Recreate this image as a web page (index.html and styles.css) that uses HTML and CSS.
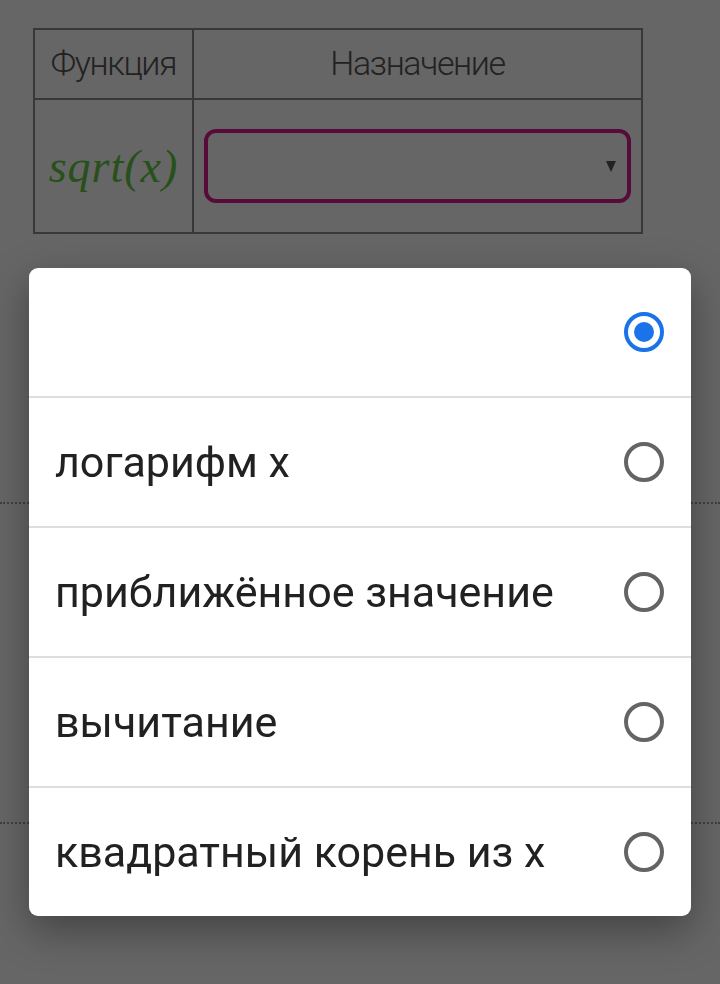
FILE: index.html
```html
<!DOCTYPE html>
<html lang="ru">
<head>
    <meta charset="UTF-8">
    <meta name="viewport" content="width=device-width, initial-scale=1.0">
    <title>Функции</title>
    <link rel="stylesheet" href="styles.css">
</head>
<body>
    <div class="page">
        <table class="task">
            <tr>
                <th class="col-fn">Функция</th>
                <th>Назначение</th>
            </tr>
            <tr>
                <td class="math">sqrt(<i>x</i>)</td>
                <td>
                    <div class="select">
                        <span class="arrow"></span>
                    </div>
                </td>
            </tr>
        </table>

        <div class="dots first"></div>
        <div class="dots"></div>
    </div>

    <!-- выпадающий список -->
    <div class="dialog">
        <div class="option">
            <span class="label"></span>
            <span class="radio checked"></span>
        </div>
        <div class="option">
            <span class="label">логарифм x</span>
            <span class="radio"></span>
        </div>
        <div class="option">
            <span class="label">приближённое значение</span>
            <span class="radio"></span>
        </div>
        <div class="option">
            <span class="label">вычитание</span>
            <span class="radio"></span>
        </div>
        <div class="option">
            <span class="label">квадратный корень из x</span>
            <span class="radio"></span>
        </div>
    </div>
</body>
</html>
```

FILE: styles.css
```css
* {
    margin: 0;
    padding: 0;
    box-sizing: border-box;
}

body {
    background: #666666;
    font-family: Roboto, 'Noto Sans', sans-serif;
    min-height: 100vh;
}

.page {
    padding: 28px 0 0 33px;
}

.task {
    border-collapse: collapse;
    width: 610px;
}

.task th,
.task td {
    border: 2px solid #383838;
    text-align: center;
    vertical-align: middle;
}

.task th {
    height: 70px;
    padding-bottom: 3px;
    font-family: Roboto, sans-serif;
    font-weight: 300;
    font-size: 34px;
    letter-spacing: -1.4px;
    color: #222;
}

.task .col-fn {
    width: 159px;
}

.task td {
    height: 134px;
}

.math {
    font-family: 'Liberation Serif', 'DejaVu Serif', serif;
    font-style: italic;
    font-size: 46px;
    color: #27501a;
    letter-spacing: 1px;
}

.math i {
    font-style: italic;
}

.select {
    margin: 0 10px 0 10px;
    height: 74px;
    border: 4px solid #560b39;
    border-radius: 12px;
    display: flex;
    align-items: center;
    justify-content: flex-end;
    padding-right: 11px;
}

.arrow {
    width: 0;
    height: 0;
    border-left: 5px solid transparent;
    border-right: 5px solid transparent;
    border-top: 11px solid #222;
}

.dots {
    margin-left: -33px;
    height: 0;
    border-top: 2px dotted #3b4148;
    margin-top: 318px;
}

.dots.first {
    margin-top: 268px;
}

/* диалог выбора */
.dialog {
    position: fixed;
    left: 29px;
    top: 268px;
    width: 662px;
    background: #fff;
    border-radius: 9px;
    box-shadow: 0 14px 40px rgba(0,0,0,0.35);
    overflow: hidden;
}

.option {
    height: 130px;
    display: flex;
    align-items: center;
    justify-content: space-between;
    padding: 0 27px 0 26px;
    border-top: 2px solid #dddddd;
}

.option:first-child {
    height: 128px;
    border-top: none;
}

.label {
    font-size: 43px;
    color: #212121;
}

.radio {
    width: 40px;
    height: 40px;
    border: 4px solid #646464;
    border-radius: 50%;
    flex-shrink: 0;
}

.radio.checked {
    border-color: #1a73e8;
    display: flex;
    align-items: center;
    justify-content: center;
}

.radio.checked::after {
    content: '';
    width: 20px;
    height: 20px;
    border-radius: 50%;
    background: #1a73e8;
}
```
